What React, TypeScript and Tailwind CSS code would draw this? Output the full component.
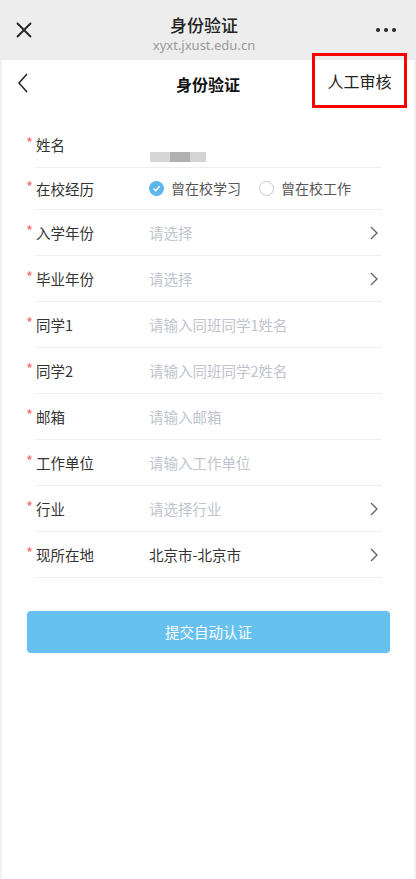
import React from 'react';

const font = { fontFamily: '"Noto Sans CJK SC", "Noto Sans", sans-serif' };

const Chevron = () => (
  <svg width="10" height="16" viewBox="0 0 10 16" className="shrink-0">
    <path d="M2 2 L8 8 L2 14" fill="none" stroke="#666" strokeWidth="1.4" />
  </svg>
);

const Label: React.FC<{ text: string }> = ({ text }) => (
  <div className="w-[123px] flex items-center -ml-[9px] text-[14.5px] text-[#333]">
    <span className="text-[#f56c6c] text-[15px] w-[10px] leading-none -mt-[4px]">*</span>
    <span>{text}</span>
  </div>
);

interface RowProps {
  label: string;
  value?: string;
  placeholder?: string;
  arrow?: boolean;
}

const Row: React.FC<RowProps> = ({ label, value, placeholder, arrow }) => (
  <div className="flex items-center h-[46px] border-b border-[#eeeeee]">
    <Label text={label} />
    <div className={`flex-1 text-[14.5px] ${value ? 'text-[#333]' : 'text-[#c0c4cc]'}`}>
      {value || placeholder}
    </div>
    {arrow && <div className="pr-[3px]"><Chevron /></div>}
  </div>
);

export default function App() {
  return (
    <div className="min-h-[879px] bg-[#f2f2f2] px-[2px]" style={font}>
      <div className="min-h-[879px] bg-white flex flex-col">
        {/* browser header */}
        <div className="-mx-[2px] h-[60px] bg-[#ededed] flex items-center px-[16px]">
          <svg width="16" height="16" viewBox="0 0 16 16">
            <path d="M1 1 L15 15 M15 1 L1 15" stroke="#222" strokeWidth="1.8" />
          </svg>
          <div className="flex-1 flex flex-col items-center pt-[8px]">
            <div className="text-[17px] font-medium text-[#222] leading-[22px]">身份验证</div>
            <div className="text-[13px] text-[#999] leading-[18px]" style={{ fontFamily: '"Noto Sans", sans-serif' }}>xyxt.jxust.edu.cn</div>
          </div>
          <div className="flex gap-[4px] pr-[4px]">
            <span className="w-[4px] h-[4px] rounded-full bg-[#222]" />
            <span className="w-[4px] h-[4px] rounded-full bg-[#222]" />
            <span className="w-[4px] h-[4px] rounded-full bg-[#222]" />
          </div>
        </div>

        {/* nav */}
        <div className="relative h-[46px] flex items-center px-[15px]">
          <svg width="12" height="20" viewBox="0 0 12 20">
            <path d="M10 1 L2 10 L10 19" fill="none" stroke="#222" strokeWidth="1.5" />
          </svg>
          <div className="flex-1 text-center text-[16px] font-bold text-[#111] pt-[2px]">身份验证</div>
          <div className="w-[12px]" />
          <div className="absolute left-[310px] top-[-7px] w-[95px] h-[55px] border-[3px] border-[#ff0000] flex items-center justify-center text-[16px] text-[#222]">
            人工审核
          </div>
        </div>

        {/* form */}
        <div className="pl-[33px] pr-[32px] pt-[16px]">
          <div className="relative">
            <Row label="姓名" />
            <div className="absolute left-[115px] top-[30px] flex h-[10px] blur-[0.6px]">
              <div className="w-[20px] bg-[#d6d6d6]" />
              <div className="w-[20px] bg-[#b0b0b0]" />
              <div className="w-[16px] bg-[#d4d4d4]" />
            </div>
          </div>
          <div className="flex items-center h-[42px] border-b border-[#eeeeee]">
            <Label text="在校经历" />
            <div className="flex items-center text-[14px] text-[#555]">
              <span className="w-[15px] h-[15px] rounded-full bg-[#5bb7ec] flex items-center justify-center mr-[7px]">
                <svg width="9" height="9" viewBox="0 0 9 9">
                  <path d="M1.5 4.5 L3.7 6.7 L7.6 2.3" fill="none" stroke="#fff" strokeWidth="1.5" />
                </svg>
              </span>
              <span>曾在校学习</span>
              <span className="w-[15px] h-[15px] rounded-full border border-[#c8c8c8] ml-[18px] mr-[7px]" />
              <span>曾在校工作</span>
            </div>
          </div>
          <Row label="入学年份" placeholder="请选择" arrow />
          <Row label="毕业年份" placeholder="请选择" arrow />
          <Row label="同学1" placeholder="请输入同班同学1姓名" />
          <Row label="同学2" placeholder="请输入同班同学2姓名" />
          <Row label="邮箱" placeholder="请输入邮箱" />
          <Row label="工作单位" placeholder="请输入工作单位" />
          <Row label="行业" placeholder="请选择行业" arrow />
          <Row label="现所在地" value="北京市-北京市" arrow />
        </div>

        <div className="pl-[25px] pr-[24px] pt-[33px]">
          <button className="w-full h-[42px] rounded-[4px] bg-[#67c1ef] text-white text-[14.5px]">
            提交自动认证
          </button>
        </div>
      </div>
    </div>
  );
}
